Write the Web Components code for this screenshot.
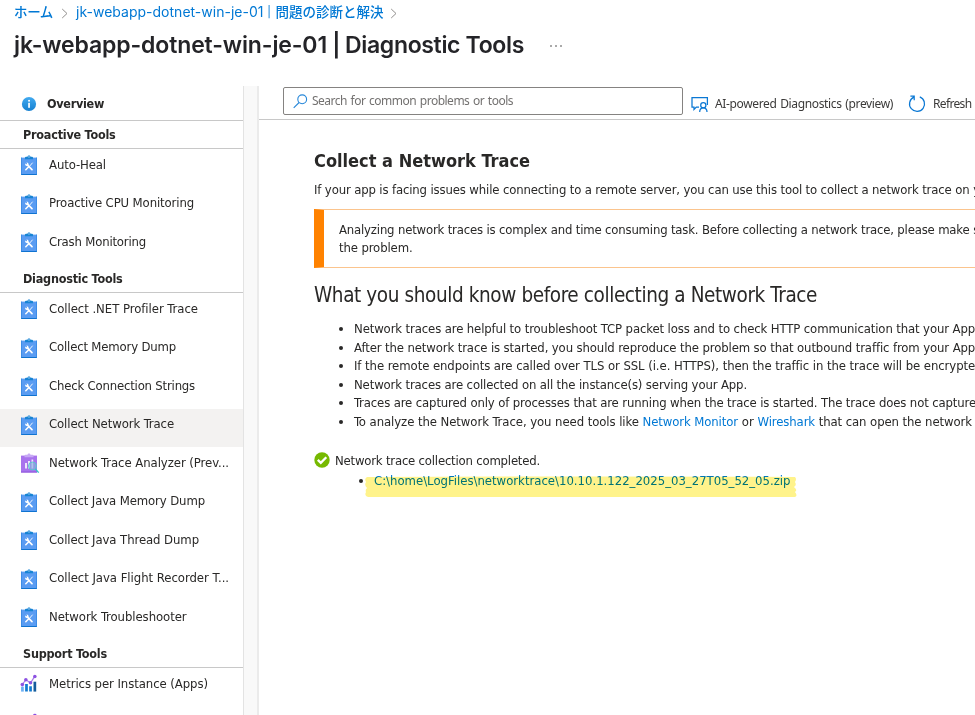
<!DOCTYPE html>
<html lang="ja">
<head>
<meta charset="utf-8">
<title>Diagnostic Tools</title>
<style>
html,body{margin:0;height:100%;overflow:hidden;background:#fff}
body{font:13px/18.6px "DejaVu Sans Condensed","DejaVu Sans","Noto Sans CJK JP",sans-serif;color:#292827}
</style>
</head>
<body>
<diag-app></diag-app>
<script>
const define=(name,html,setup)=>customElements.define(name,class extends HTMLElement{
  constructor(){super();this.attachShadow({mode:'open'})}
  connectedCallback(){this.shadowRoot.innerHTML=typeof html==='function'?html(this):html;if(setup)setup(this)}
});

/* Text run whose tracking is adjusted to occupy the width in its "w" attribute. */
define('fit-text','<style>:host{display:inline-block;white-space:pre}</style><slot></slot>',el=>{
  const n=[...el.textContent].length,w=+el.getAttribute('w');
  const natural=el.getBoundingClientRect().width;
  if(w&&natural){el.style.letterSpacing=((w-natural)/n)+'px'}
});

const icons={
  info:`<svg width="16" height="16" viewBox="0 0 16 16"><defs><linearGradient id="g" x2="0" y2="1"><stop stop-color="#41aaf0"/><stop offset="1" stop-color="#1680d0"/></linearGradient></defs><circle cx="8" cy="8" r="7.1" fill="url(#g)"/><rect x="7.2" y="6.8" width="1.7" height="5" fill="#fff"/><circle cx="8.05" cy="4.7" r="1" fill="#fff"/></svg>`,
  tool:`<svg width="18" height="20" viewBox="0 0 18 20"><path d="M1 2.6h16V20H1z" fill="#5a9cf2"/><path d="M1 19h16v1H1z" fill="#0f73d0"/><path d="M1 2.6h.6V20H1zM16.4 2.6h.6V20h-.6z" fill="#2b84df"/><path d="M5 4.3V2.7c0-.8.6-1 1.5-1h1C7.600.8 8.200.4 9 .4s1.400.4 1.500 1.300h1c.9 0 1.500.2 1.500 1v1.600z" fill="#1784d4"/><circle cx="9" cy="1.900" r=".55" fill="#fff"/><path d="M7.300 9.800l4.700 4.800" stroke="#fff" stroke-width="1.700" stroke-linecap="round"/><path d="M5 8.200l.3 2.100 1.300.8 1.800-.5.300-1.700-1-1.200-1.300-.2.700 1.300-.8.700z" fill="#fff"/><path d="M12.600 7.700l-3 3.500" stroke="#fff" stroke-width=".9"/><path d="M9 11.500l-3.200 3.300" stroke="#fff" stroke-width="1.500" stroke-linecap="round"/></svg>`,
  analyzer:`<svg width="18" height="20" viewBox="0 0 18 20" style="overflow:visible"><path d="M1 2.600h16V19.500H1z" fill="#a873ed"/><path d="M1 18.600h16v.9H1z" fill="#8a50d8"/><path d="M4.500 4.300V2.700c0-.8.600-1 1.500-1h1.500C7.600.8 8.200.4 9 .4s1.400.4 1.500 1.300H12c.9 0 1.500.2 1.500 1v1.600z" fill="#c7a9f5"/><path d="M5 10h2v5.500H5zM8 8h2v7.500H8zM11.500 6.500h1.700v9h-1.700z" fill="#eee5fb"/><circle cx="12.500" cy="13" r="4" fill="#82b8dc" fill-opacity=".6" stroke="#53c8cd" stroke-width=".9"/><path d="M15.400 16l3.300 3.600" stroke="#32c7c5" stroke-width="1.300"/></svg>`,
  metric:`<svg width="20" height="21" viewBox="0 0 20 21"><path d="M1.200 14h3v5.500h-3z" fill="#6aaff4"/><path d="M5.700 11h3v8.500h-3zM10.200 13.500h3v6h-3z" fill="#137bd0"/><path d="M15 8.500h3v11h-3z" fill="#155c9c"/><path d="M2.500 11.700L6.500 6.300l5.300 3.500L16.500 2.300" fill="none" stroke="#a77ce8" stroke-width="1.300"/><g fill="#8d52e2"><circle cx="2.600" cy="11.700" r="2"/><circle cx="6.500" cy="6.300" r="2"/><circle cx="11.700" cy="9.700" r="2"/><circle cx="16.500" cy="2.700" r="2"/></g></svg>`,
  search:`<svg width="15" height="15" viewBox="0 0 15 15" fill="none" stroke="#2687d9" stroke-width="1.100"><circle cx="9.200" cy="5.300" r="4.400"/><path d="M6.100 8.500L.7 13.900"/></svg>`,
  chat:`<svg width="18" height="18" viewBox="0 0 18 18" fill="none" stroke="#0b78d4" stroke-width="1.250"><path d="M8 12H5.300L3 14.400V12H1V2.600h15.400V10"/><circle cx="12.300" cy="10.200" r="2.600"/><path d="M8.700 17c0-2.500 1.500-4.200 3.600-4.200s3.700 1.700 3.700 4.200"/></svg>`,
  refresh:`<svg width="18" height="18" viewBox="0 0 18 18" fill="none" stroke="#0b78d4" stroke-width="1.250"><path d="M11.800 1.900A7.500 7.500 0 1 1 5.800 2.100M2.400 1.200h3.800V5.200"/></svg>`,
  check:`<svg width="16" height="16" viewBox="0 0 16 16"><circle cx="8" cy="8" r="7.700" fill="#76b900"/><path d="M3.800 7.900l3 3 5.500-5.600" fill="none" stroke="#fff" stroke-width="2.300"/></svg>`,
  chevron:`<svg width="8" height="11" viewBox="0 0 8 11" fill="none" stroke="#918f8d"><path d="M1.200 1l4.800 4.500L1.200 10"/></svg>`
};
define('ui-icon',el=>`<style>:host{display:inline-flex;flex:none;align-items:center;justify-content:center}svg{display:block}</style>${icons[el.getAttribute('name')]}`);

define('page-header',`<style>
:host{display:block;height:86px;box-sizing:border-box;padding-left:14px;font-family:Inter,"Noto Sans CJK JP",sans-serif}
nav{display:flex;height:25px;align-items:center;color:#0078d4;font-size:14px;font-weight:400}
nav ui-icon{margin:1px 7px 0 8px}
.title{display:flex;align-items:center;height:40px}
h1{margin:0;font-size:23px;font-weight:600;line-height:40px;color:#242428}
.dots{display:flex;gap:3px;margin:2px 0 0 26px}.dots i{width:2px;height:2px;background:#aaa}
.jp{font-weight:500;font-size:13.500px}
</style>
<nav><fit-text class="jp" w="39">ホーム</fit-text><ui-icon name="chevron"></ui-icon><fit-text w="187.500">jk-webapp-dotnet-win-je-01</fit-text><fit-text w="12" style="font-size:11px"> | </fit-text><fit-text class="jp" w="108">問題の診断と解決</fit-text><ui-icon name="chevron" style="margin-left:6px"></ui-icon></nav>
<div class="title"><h1><fit-text w="313">jk-webapp-dotnet-win-je-01</fit-text><fit-text w="18"> | </fit-text><fit-text w="179">Diagnostic Tools</fit-text></h1><div class="dots"><i></i><i></i><i></i></div></div>`);

define('nav-section',`<style>
:host{display:flex;box-sizing:border-box;height:28.400px;border-bottom:1px solid #c8c8c8;padding:1px 0 0 23px;align-items:center;font-weight:700;font-size:12.500px}
</style><slot></slot>`);
define('nav-item',el=>`<style>
:host{display:flex;box-sizing:border-box;height:38.500px;padding:0 0 7px 20px;align-items:center;flex:none}
:host([selected]){background:#f3f2f1}
ui-icon{width:18px;margin:0 11px 0 0}
</style><ui-icon name="${el.getAttribute('icon')||'tool'}"></ui-icon><slot></slot>`);

const item=(text,w,attrs='')=>`<nav-item ${attrs}><fit-text w="${w}">${text}</fit-text></nav-item>`;
define('side-nav',`<style>
:host{display:flex;flex-direction:column;width:243px;flex:none;overflow:hidden}
.over{display:flex;align-items:center;box-sizing:border-box;height:35px;flex:none;border-bottom:1px solid #c8c8c8;padding:3px 0 0 21px;font-weight:700;font-size:12.500px;gap:10px}
.over ui-icon{margin-top:-2px}
nav-section{flex:none}
</style>
<div class="over"><ui-icon name="info"></ui-icon><fit-text w="57">Overview</fit-text></div>
<nav-section><fit-text w="92.500">Proactive Tools</fit-text></nav-section>
${item('Auto-Heal',57)}${item('Proactive CPU Monitoring',145)}${item('Crash Monitoring',97)}
<nav-section><fit-text w="99.500">Diagnostic Tools</fit-text></nav-section>
${item('Collect .NET Profiler Trace',149)}${item('Collect Memory Dump',127)}${item('Check Connection Strings',146)}${item('Collect Network Trace',125,'selected')}${item('Network Trace Analyzer (Prev...',180,'icon="analyzer"')}${item('Collect Java Memory Dump',156)}${item('Collect Java Thread Dump',150)}${item('Collect Java Flight Recorder T...',180)}${item('Network Troubleshooter',137.5)}
<nav-section><fit-text w="84">Support Tools</fit-text></nav-section>
${item('Metrics per Instance (Apps)',159,'icon="metric"')}<nav-item icon="metric"></nav-item>`);

define('tool-bar',`<style>
:host{display:flex;box-sizing:border-box;height:34px;border-bottom:1px solid #c8c8c8;padding:1px 0 0 24px;white-space:nowrap;font-family:"Noto Sans",sans-serif;font-size:12px;color:#3b3a39}
.search{display:flex;align-items:center;gap:4px;box-sizing:border-box;width:400px;height:28px;border:1px solid #858381;border-radius:2px;padding-left:9px;color:#737170;flex:none;word-spacing:1px}
.cmd{display:flex;align-items:center;height:34px;gap:6px;margin-left:8px;flex:none;word-spacing:1px}
.cmd+.cmd{margin-left:15px;gap:7px}
.cmd ui-icon{margin-top:-1px}
</style>
<div class="search"><ui-icon name="search"></ui-icon><fit-text w="201">Search for common problems or tools</fit-text></div>
<div class="cmd"><ui-icon name="chat"></ui-icon><fit-text w="178">AI-powered Diagnostics (preview)</fit-text></div>
<div class="cmd"><ui-icon name="refresh"></ui-icon><fit-text w="38.500">Refresh</fit-text></div>`);

define('warning-box',`<style>
:host{display:block;box-sizing:border-box;height:59px;width:900px;border:1px solid #fbc48d;border-left:10px solid #ff8200;padding:11px 0 0 15px;line-height:18px}
</style><slot></slot>`);

define('trace-result',`<style>
:host{display:block;margin-top:20px}
.status{display:flex;align-items:center;gap:5px;height:20px}
.status ui-icon{margin-top:-3px}
.file{display:flex;align-items:flex-start;height:26px;padding-left:44px}
.dot{width:4px;height:4px;border-radius:50%;background:#292827;margin:7px 3px 0 1px}
.mark{position:relative;height:23px;width:430px}
.mark svg{position:absolute;left:-1px;top:4px}
a{position:absolute;left:8px;top:-1px;color:#0078d4;line-height:20px}
.mark svg{mix-blend-mode:multiply;z-index:1}
</style>
<div class="status"><ui-icon name="check"></ui-icon><fit-text w="205">Network trace collection completed.</fit-text></div>
<div class="file"><span class="dot"></span><div class="mark"><a><fit-text w="416.500">C:\\home\\LogFiles\\networktrace\\10.10.1.122_2025_03_27T05_52_05.zip</fit-text></a><svg width="432" height="22" viewBox="0 0 431 22" preserveAspectRatio="none"><path d="M2 1Q215 0 429 1q2 2 0 5 2 3-1 5 4 3 1 5 3 4 0 5H3q-4-1-2-5-1-2 1-4-3-3-1-6-2-3 1-5z" fill="#fff38b"/></svg></div></div>`);

define('trace-content',`<style>
:host{display:block;padding:30px 0 0 55px;white-space:nowrap}
h2{margin:0;font-size:18px;line-height:22px;font-weight:700}
p{margin:9px 0 10px;line-height:18px}
h3{margin:15px 0 13px;font-size:20.500px;line-height:24px;font-weight:400}
ul{margin:0;padding:0 0 0 40px}li{height:18.600px}
b{font-weight:400;color:#0078d4}
</style>
<h2><fit-text w="216">Collect a Network Trace</fit-text></h2>
<p><fit-text w="655.500">If your app is facing issues while connecting to a remote server, you can use this tool to collect a network trace on</fit-text> your</p>
<warning-box><fit-text w="630.500">Analyzing network traces is complex and time consuming task. Before collecting a network trace, please make</fit-text> sure<br><fit-text w="73.500">the problem.</fit-text></warning-box>
<h3><fit-text w="503">What you should know before collecting a Network Trace</fit-text></h3>
<ul>
<li><fit-text w="621">Network traces are helpful to troubleshoot TCP packet loss and to check HTTP communication that your App</fit-text></li>
<li><fit-text w="621">After the network trace is started, you should reproduce the problem so that outbound traffic from your App</fit-text></li>
<li><fit-text w="621">If the remote endpoints are called over TLS or SSL (i.e. HTTPS), then the traffic in the trace will be encrypte</fit-text></li>
<li><fit-text w="393">Network traces are collected on all the instance(s) serving your App.</fit-text></li>
<li><fit-text w="622">Traces are captured only of processes that are running when the trace is started. The trace does not capture</fit-text></li>
<li><fit-text w="288.500">To analyze the Network Trace, you need tools like </fit-text><b><fit-text w="95.500">Network Monitor</fit-text></b><fit-text w="19.500"> or </fit-text><b><fit-text w="57.500">Wireshark</fit-text></b><fit-text w="157"> that can open the network</fit-text></li>
</ul>
<trace-result></trace-result>`);

define('diag-app',`<style>
:host{display:flex;flex-direction:column;height:715px;overflow:hidden}
.body{display:flex;height:629px}
.gutter{flex:none;box-sizing:border-box;width:16px;background:#f9f9f9;border-left:1px solid #e3e3e3;border-right:2px solid #ebebeb}
main{flex:1;min-width:0;overflow:hidden}
</style>
<page-header></page-header>
<div class="body"><side-nav></side-nav><div class="gutter"></div><main><tool-bar></tool-bar><trace-content></trace-content></main></div>`);
</script>
</body>
</html>
